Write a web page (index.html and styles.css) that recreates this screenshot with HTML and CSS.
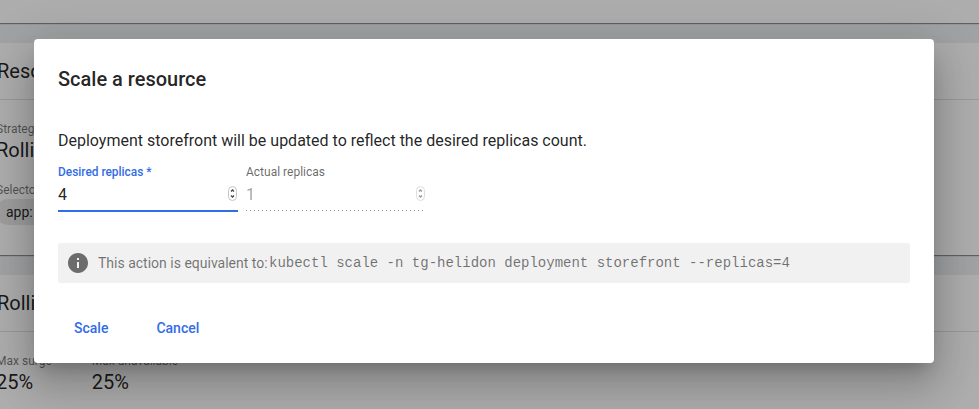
FILE: index.html
```html
<!DOCTYPE html>
<html lang="en">
<head>
<meta charset="utf-8">
<title>Scale a resource</title>
<link rel="stylesheet" href="styles.css">
</head>
<body>
<main class="page">
  <section class="card card-top"></section>
  <section class="card card-info">
    <h2 class="card-title">Resource</h2>
    <div class="card-body">
      <div class="prop"><div class="label">Strategy</div><div class="value">Rolling</div></div>
      <div class="prop selector"><div class="label">Selector</div><span class="chip">app:</span></div>
    </div>
  </section>
  <section class="card card-update">
    <h2 class="card-title">Rolling update</h2>
    <div class="card-body row">
      <div class="prop"><div class="label">Max surge</div><div class="value">25%</div></div>
      <div class="prop"><div class="label">Max unavailable</div><div class="value">25%</div></div>
    </div>
  </section>
</main>
<div class="backdrop">
  <div class="dialog" role="dialog">
    <h1 class="title">Scale a resource</h1>
    <p class="message">Deployment storefront will be updated to reflect the desired replicas count.</p>
    <div class="fields">
      <div class="field active">
        <div class="field-label">Desired replicas *</div>
        <div class="field-input"><span>4</span>
          <svg class="spinner" viewBox="0 0 9 15"><rect x=".5" y=".5" width="8" height="14" rx="4"/><path d="M3 5.5 4.500 4 6 5.500M3 9.500 4.500 11 6 9.500"/></svg>
        </div>
      </div>
      <div class="field disabled">
        <div class="field-label">Actual replicas</div>
        <div class="field-input"><span>1</span>
          <svg class="spinner" viewBox="0 0 9 15"><rect x=".5" y=".5" width="8" height="14" rx="4"/><path d="M3 5.500 4.500 4 6 5.500M3 9.500 4.500 11 6 9.500"/></svg>
        </div>
      </div>
    </div>
    <div class="hint">
      <svg class="info" viewBox="0 0 24 24"><path d="M12 2C6.480 2 2 6.480 2 12s4.480 10 10 10 10-4.480 10-10S17.520 2 12 2zm1 15h-2v-6h2v6zm0-8h-2V7h2v2z"/></svg>
      <span class="hint-text">This action is equivalent to:</span><code>kubectl scale -n tg-helidon deployment storefront --replicas=4</code>
    </div>
    <div class="actions"><button>Scale</button><button>Cancel</button></div>
  </div>
</div>
</body>
</html>
```
FILE: styles.css
```css
* { box-sizing: border-box; }
body { margin: 0; height: 409px; overflow: hidden; font-family: Roboto, "Liberation Sans", sans-serif; color: rgba(0,0,0,.87); }
h1, h2, p { margin: 0; font-weight: 400; }
.page { height: 409px; overflow: hidden; background: #eceff1; display: flex; flex-direction: column; gap: 20px; }
.card { background: #fff; flex: none; box-shadow: 0 1px 1px rgba(0,0,0,.4); }
.card-top { height: 23px; }
.card-info { height: 212px; }
.card-update { height: 180px; }
.card-title { height: 57px; line-height: 56px; font-size: 20px; border-bottom: 1px solid rgba(0,0,0,.12); text-indent: -3px; }
.card-body { padding: 20px 0 0; margin-left: -4px; }
.row { display: flex; gap: 40px; }
.label { font-size: 12px; line-height: 18px; color: rgba(0,0,0,.54); white-space: nowrap; }
.value { font-size: 20px; line-height: 24px; }
.selector { margin-top: 19px; }
.chip { display: block; width: 100px; height: 26px; margin: 0 0 0 -1px; padding-left: 11px; border-radius: 13px; background: #e8e8e8; font-size: 14px; line-height: 26px; }
.backdrop { position: absolute; inset: 0; padding: 39px 45px 46px 34px; background: rgba(0,0,0,.32); }
.dialog { height: 324px; padding: 24px; border-radius: 4px; background: #fff; box-shadow: 0 11px 15px -7px rgba(0,0,0,.2), 0 24px 38px 3px rgba(0,0,0,.14), 0 9px 46px 8px rgba(0,0,0,.12); }
.title { font-size: 20px; line-height: 32px; font-weight: 500; }
.message { margin-top: 34px; font-size: 16px; line-height: 24px; }
.fields { display: flex; gap: 8px; margin-top: 10px; }
.field { width: 180px; height: 49px; border-bottom: 2px solid #326de6; }
.field-label { font-size: 12px; line-height: 18px; color: rgba(0,0,0,.6); }
.active .field-label { color: #326de6; font-weight: 500; font-size: 11.9px; }
.field-input { display: flex; justify-content: space-between; align-items: center; height: 26px; padding-right: 1px; font-size: 16px; line-height: 26px; }
.field-input span { padding-top: 2px; }
.spinner { width: 9px; height: 15px; margin-bottom: 1px; fill: none; stroke: #444; stroke-width: 1.3; }
.spinner rect { stroke: #c4c4c4; stroke-width: 1; }
.disabled { height: 48px; border: 0; background: repeating-linear-gradient(to right, rgba(0,0,0,.42) 0 1px, transparent 1px 4px) 0 100% / 178px 1px no-repeat; }
.disabled .field-input { color: rgba(0,0,0,.38); }
.disabled .spinner { opacity: .55; }
.hint { display: flex; align-items: center; height: 40px; margin-top: 31px; padding-left: 8px; border-radius: 2px; background: #f1f1f1; color: rgba(0,0,0,.54); font-size: 14px; white-space: nowrap; }
.info { width: 24px; height: 24px; fill: #6c6c6c; margin-right: 8px; }
.hint-text { width: 171px; margin-top: -1px; }
.hint code { font: 14px "Courier New", "Liberation Mono", monospace; }
.actions { display: flex; gap: 16px; margin-top: 27px; }
.actions button { height: 36px; padding: 0 16px; border: 0; background: none; color: #326de6; font: 500 14px/36px Roboto, sans-serif; }
```
